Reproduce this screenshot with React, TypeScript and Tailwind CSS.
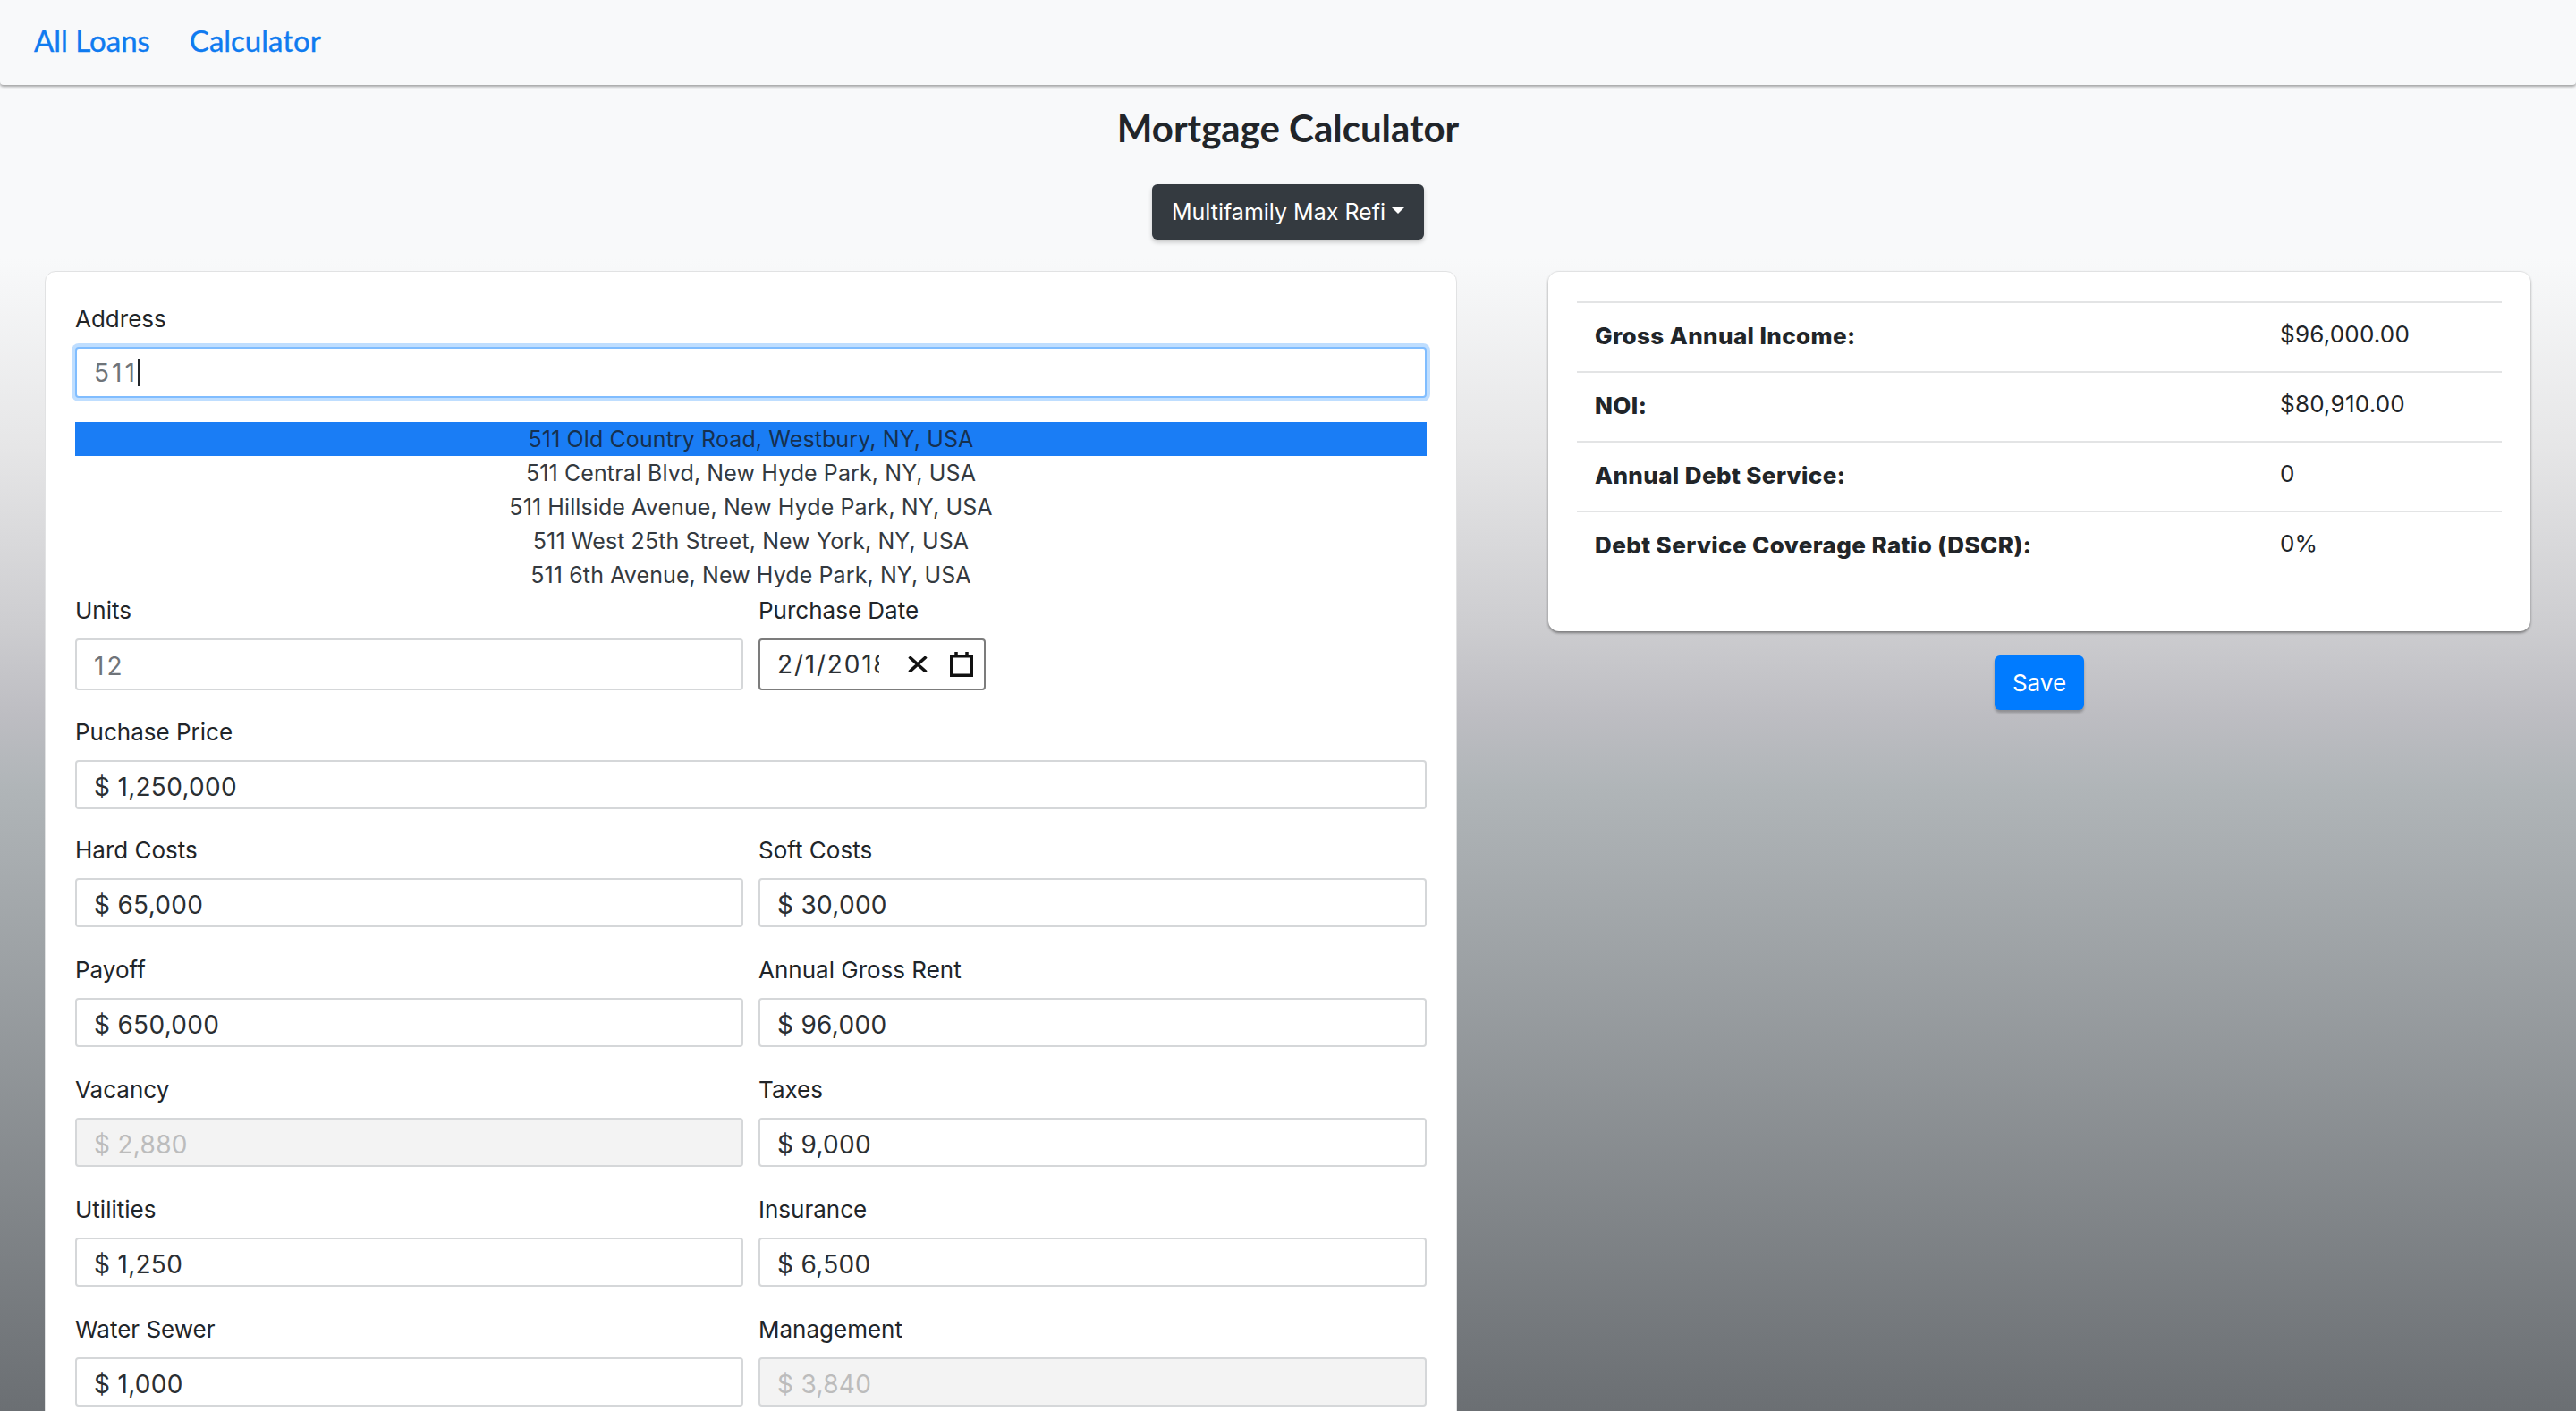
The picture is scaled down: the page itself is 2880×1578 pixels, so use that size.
import { ReactNode } from "react";

const fieldBase =
  "w-full rounded-[4px] border-2 border-[#d5d7d9] pt-[4px] pr-[19px] pl-[19px] text-[28px] font-[Inter,sans-serif] outline-none";

function Label({ children }: { children: ReactNode }) {
  return <label className="mb-[15px] block h-[33px] text-[26px] leading-[33px] text-[#212529]">{children}</label>;
}

function Field({ label, value, disabled }: { label: string; value: string; disabled?: boolean }) {
  return (
    <div>
      <Label>{label}</Label>
      <input
        readOnly
        value={value}
        disabled={disabled}
        className={`${fieldBase} h-[55px] tracking-[0.3px] ${disabled ? "bg-[#f3f3f3] text-[#bcbcbc]" : "bg-white text-[#2b2f33]"}`}
      />
    </div>
  );
}

const suggestions = [
  "511 Old Country Road, Westbury, NY, USA",
  "511 Central Blvd, New Hyde Park, NY, USA",
  "511 Hillside Avenue, New Hyde Park, NY, USA",
  "511 West 25th Street, New York, NY, USA",
  "511 6th Avenue, New Hyde Park, NY, USA",
];

const results = [
  { label: "Gross Annual Income:", value: "$96,000.00" },
  { label: "NOI:", value: "$80,910.00" },
  { label: "Annual Debt Service:", value: "0" },
  { label: "Debt Service Coverage Ratio (DSCR):", value: "0%" },
];

const pairs = [
  [{ label: "Hard Costs", value: "$ 65,000" }, { label: "Soft Costs", value: "$ 30,000" }],
  [{ label: "Payoff", value: "$ 650,000" }, { label: "Annual Gross Rent", value: "$ 96,000" }],
  [{ label: "Vacancy", value: "$ 2,880", disabled: true }, { label: "Taxes", value: "$ 9,000" }],
  [{ label: "Utilities", value: "$ 1,250" }, { label: "Insurance", value: "$ 6,500" }],
  [{ label: "Water Sewer", value: "$ 1,000" }, { label: "Management", value: "$ 3,840", disabled: true }],
];

export default function App() {
  return (
    <div className="h-[1578px] overflow-hidden bg-[linear-gradient(#f8f9fa_0,#f8f9fa_290px,#e6e6e7_500px,#cdcdd0_700px,#bdbdc2_800px,#b0b5b8_880px,#6b6f73_1578px)] font-[Inter,sans-serif] text-[#212529]">
      <nav className="flex h-[95px] items-center gap-[44px] rounded-b-[4px] bg-[#f8f9fa] pb-[4px] pl-[38px] font-[Lato,sans-serif] text-[33px] text-[#0f7bf0] shadow-[0_2px_3px_rgba(0,0,0,0.35)] [-webkit-text-stroke:0.4px_#0f7bf0]">
        <a>All Loans</a>
        <a>Calculator</a>
      </nav>

      <h1 className="mt-[25px] text-center font-[Lato,sans-serif] text-[42px] leading-[46px] font-bold text-[#212529]">
        Mortgage Calculator
      </h1>

      <div className="mt-[40px] flex justify-center">
        <button className="flex h-[62px] w-[304px] items-center justify-center gap-[7px] rounded-[6px] bg-[#343a40] pt-[2px] text-[25px] text-white shadow-[0_3px_5px_rgba(0,0,0,0.2)]">
          Multifamily Max Refi
          <span className="mb-[6px] border-x-[7px] border-t-[7px] border-x-transparent border-t-white" />
        </button>
      </div>

      <div className="mt-[35px] flex items-start gap-[102px] pr-[51px] pl-[50px]">
        <form className="w-[1579px] shrink-0 rounded-[12px] border border-[#e1e2e3] bg-white px-[33px] pt-[36px] pb-[100px]">
          <Label>Address</Label>
          <div className="flex h-[57px] items-center rounded-[4px] border-2 border-[#80bdff] bg-white pl-[19px] text-[28px] tracking-[3px] text-[#6f7479] shadow-[0_0_0_4px_rgba(0,123,255,0.25)]">
            511<span className="h-[30px] w-[2px] bg-[#212529]" />
          </div>

          <ul className="mt-[27px] text-center text-[25px] leading-[38px] tracking-[0.1px] text-[#343a40]">
            {suggestions.map((s, i) => (
              <li key={s} className={i === 0 ? "bg-[#1a7df5] text-[#16304f]" : ""}>{s}</li>
            ))}
          </ul>

          <div className="mt-[4px] grid grid-cols-[747px_747px] gap-x-[17px]">
            <div>
              <Label>Units</Label>
              <input readOnly value="12" className={`${fieldBase} h-[58px] bg-white tracking-[3px] text-[#6f7479]`} />
            </div>
            <div>
              <Label>Purchase Date</Label>
              <div className="flex h-[58px] w-[254px] items-center rounded-[4px] border-2 border-[#7c7c7c] bg-white pl-[19px] text-[28px] tracking-[1.8px] text-[#2b2f33]">
                <span className="w-[114px] shrink-0 overflow-hidden whitespace-nowrap">2/1/2018</span>
                <svg className="ml-[32px] h-[18px] w-[22px] shrink-0" viewBox="0 0 22 18" fill="none" stroke="#111" strokeWidth="3.5">
                  <path d="M1.5 0.5l19 17M20.5 0.5l-19 17" />
                </svg>
                <svg className="ml-[25px] h-[28px] w-[26px] shrink-0" viewBox="0 0 26 28" fill="none" stroke="#111" strokeWidth="3.5">
                  <path d="M1.75 4.75h22.5v21.5h-22.5z" />
                  <path d="M7 0v5M19 0v5" />
                </svg>
              </div>
            </div>
          </div>

          <div className="mt-[30px]">
            <Field label="Puchase Price" value="$ 1,250,000" />
          </div>

          <div className="mt-[29px] grid grid-cols-[747px_747px] gap-x-[17px] gap-y-[31px]">
            {pairs.flat().map((f) => (
              <Field key={f.label} {...f} />
            ))}
          </div>
        </form>

        <div className="flex min-w-0 flex-1 flex-col items-center">
          <div className="h-[403px] w-full rounded-[12px] border-t border-[#e1e2e3] bg-white px-[32px] pt-[33px] shadow-[0_2px_3px_rgba(0,0,0,0.4)]">
            {results.map((r) => (
              <div key={r.label} className="flex h-[78px] items-center border-t-2 border-[#e3e4e5] pb-[4px] pl-[20px] text-[26px]">
                <span className="w-[766px] font-extrabold tracking-[0.4px]">{r.label}</span>
                <span className="-mt-[3px] tracking-[0.2px]">{r.value}</span>
              </div>
            ))}
          </div>
          <button className="mt-[27px] h-[61px] w-[100px] rounded-[6px] bg-[#007bff] text-[26px] text-white shadow-[0_3px_3px_rgba(0,0,0,0.25)]">
            Save
          </button>
        </div>
      </div>
    </div>
  );
}
